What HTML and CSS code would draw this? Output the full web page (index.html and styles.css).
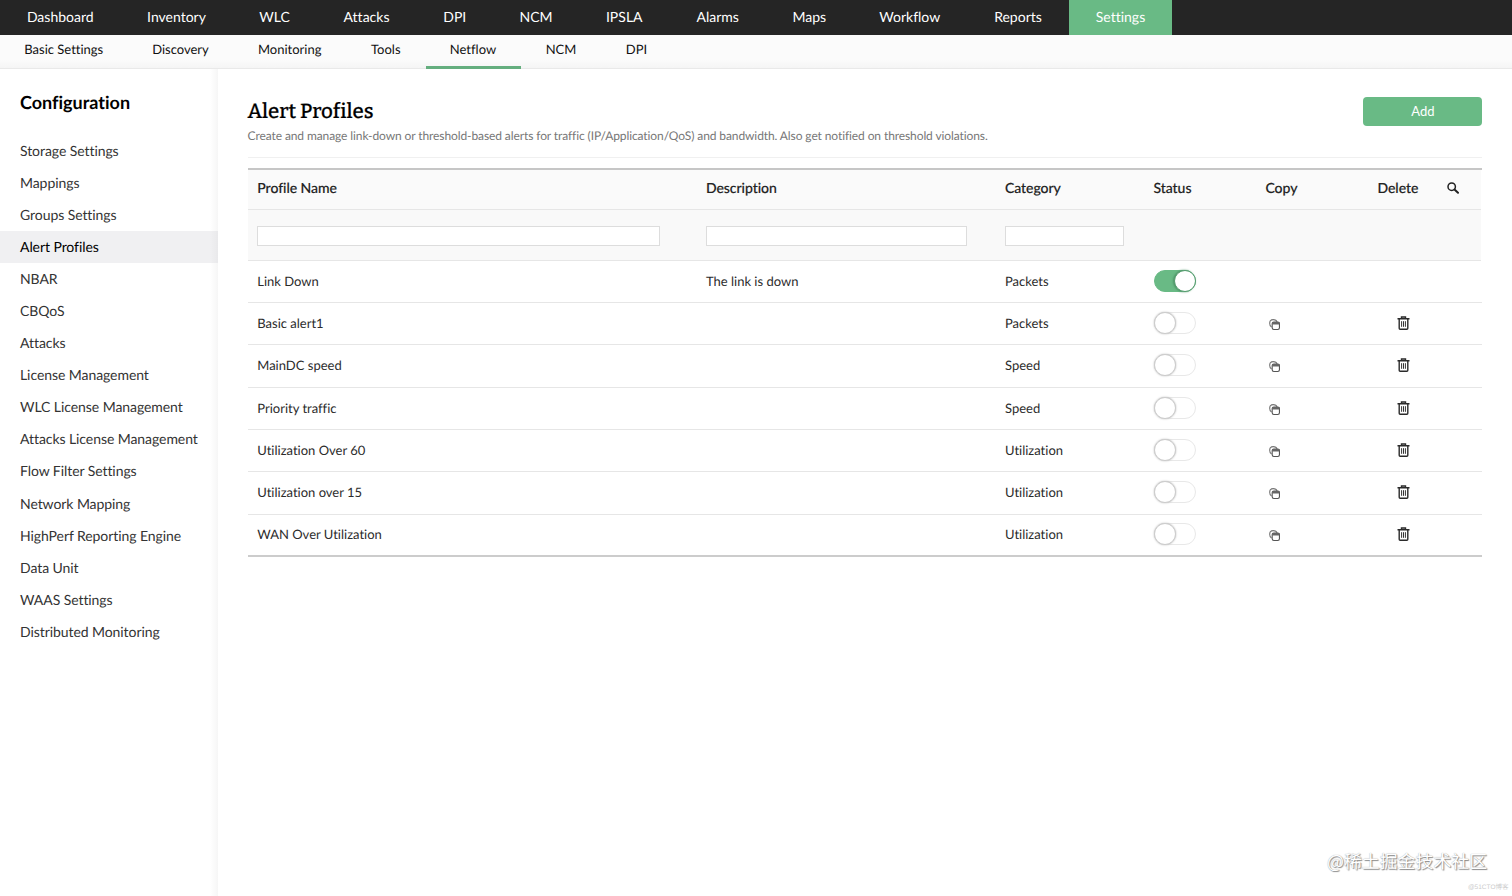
FILE: index.html
```
<!DOCTYPE html>
<html lang="en">
<head>
<meta charset="utf-8">
<title>Alert Profiles</title>
<link rel="stylesheet" href="styles.css">
</head>
<body>
<svg width="0" height="0" class="defs">
  <symbol id="copy" viewBox="0 0 10 10"><path d="M2.300 7.300C1 6.600.6 5.400.6 3.900C.6 1.700 1.700.6 3.800.6C5.700.6 6.900 1.200 7.300 2.600" fill="none" stroke="#777" stroke-width="1"/><rect x="2.900" y="2.700" width="6.600" height="6.800" rx="1.500" fill="#fff" stroke="#555" stroke-width="1"/><path d="M2.900 2.700h6.600v2.300H2.900z" fill="#666"/></symbol>
  <symbol id="trash" viewBox="0 0 12 14"><path d="M0 2.800h12M4 2.500V1h4v1.500M1.700 3v9.300q0 .9.9.9h6.800q.9 0 .9-.9V3" fill="none" stroke="#2b2b2b" stroke-width="1.400"/><path d="M4.100 5.200v5.600M6 5.200v5.600M7.900 5.200v5.600" stroke="#333" stroke-width="1"/></symbol>
</svg>
<nav class="topnav">
  <a>Dashboard</a><a>Inventory</a><a>WLC</a><a>Attacks</a><a>DPI</a><a>NCM</a><a>IPSLA</a><a>Alarms</a><a>Maps</a><a>Workflow</a><a>Reports</a><a class="active">Settings</a>
</nav>
<nav class="subnav">
  <a>Basic Settings</a><a>Discovery</a><a>Monitoring</a><a>Tools</a><a class="active">Netflow</a><a>NCM</a><a>DPI</a>
</nav>
<div class="layout">
  <aside class="sidebar">
    <h2>Configuration</h2>
    <ul>
      <li>Storage Settings</li><li>Mappings</li><li>Groups Settings</li><li class="active">Alert Profiles</li><li>NBAR</li><li>CBQoS</li><li>Attacks</li><li>License Management</li><li>WLC License Management</li><li>Attacks License Management</li><li>Flow Filter Settings</li><li>Network Mapping</li><li>HighPerf Reporting Engine</li><li>Data Unit</li><li>WAAS Settings</li><li>Distributed Monitoring</li>
    </ul>
  </aside>
  <main>
    <header class="head">
      <div><h1>Alert Profiles</h1><p>Create and manage link-down or threshold-based alerts for traffic (IP/Application/QoS) and bandwidth. Also get notified on threshold violations.</p></div>
      <button class="add">Add</button>
    </header>
    <section class="table">
      <div class="row thead"><span>Profile Name</span><span>Description</span><span>Category</span><span>Status</span><span>Copy</span><span>Delete</span><span><svg class="search" viewBox="0 0 12 12"><circle cx="4.700" cy="4.700" r="3.700" fill="none" stroke="#222" stroke-width="1.500"/><path d="M7.500 7.500l3.500 3.300" stroke="#222" stroke-width="2" stroke-linecap="round"/></svg></span></div>
      <div class="row filter"><span><input class="f1"></span><span><input class="f2"></span><span><input class="f3"></span></div>
      <div class="row"><span>Link Down</span><span>The link is down</span><span>Packets</span><span><i class="toggle on"></i></span></div>
      <div class="row"><span>Basic alert1</span><span></span><span>Packets</span><span><i class="toggle"></i></span><span><svg class="copy"><use href="#copy"/></svg></span><span><svg class="trash"><use href="#trash"/></svg></span></div>
      <div class="row"><span>MainDC speed</span><span></span><span>Speed</span><span><i class="toggle"></i></span><span><svg class="copy"><use href="#copy"/></svg></span><span><svg class="trash"><use href="#trash"/></svg></span></div>
      <div class="row"><span>Priority traffic</span><span></span><span>Speed</span><span><i class="toggle"></i></span><span><svg class="copy"><use href="#copy"/></svg></span><span><svg class="trash"><use href="#trash"/></svg></span></div>
      <div class="row"><span>Utilization Over 60</span><span></span><span>Utilization</span><span><i class="toggle"></i></span><span><svg class="copy"><use href="#copy"/></svg></span><span><svg class="trash"><use href="#trash"/></svg></span></div>
      <div class="row"><span>Utilization over 15</span><span></span><span>Utilization</span><span><i class="toggle"></i></span><span><svg class="copy"><use href="#copy"/></svg></span><span><svg class="trash"><use href="#trash"/></svg></span></div>
      <div class="row last"><span>WAN Over Utilization</span><span></span><span>Utilization</span><span><i class="toggle"></i></span><span><svg class="copy"><use href="#copy"/></svg></span><span><svg class="trash"><use href="#trash"/></svg></span></div>
    </section>
  </main>
</div>
<div class="mark">@稀土掘金技术社区</div>
<div class="mark-small">@51CTO博客</div>
</body>
</html>
```
FILE: styles.css
```
*, *::before { box-sizing: border-box; }
body { margin: 0; height: 896px; overflow: hidden; background: #fff; color: #2b2b2b; font-family: Lato, "Noto Sans CJK SC", sans-serif; font-size: 13px; display: flex; flex-direction: column; font-variant-ligatures: none; text-rendering: geometricPrecision; }
.defs { position: absolute; }
.topnav { height: 35px; flex: none; background: #252525; display: grid; grid-template-columns: 120.5px 112px 84px 100px 76.500px 86px 90.500px 96.500px 86.500px 114.500px 102px 103px; }
.topnav a { text-align: center; color: #fff; font-size: 14px; line-height: 33px; white-space: nowrap; }
.topnav .active { background: #69ba85; }
.subnav { height: 34px; flex: none; background: linear-gradient(#fbfbfb 75%, #f5f5f5); border-bottom: 1px solid #e9e9e9; display: grid; grid-template-columns: 127.500px 106px 112.500px 79.500px 95px 81px 70px; }
.subnav a { text-align: center; color: #111; font-size: 13px; line-height: 29px; height: 34px; white-space: nowrap; }
.subnav .active { border-bottom: 3px solid #64ae7e; }
.layout { display: flex; flex: 1; }
.sidebar { width: 218px; flex: none; background: linear-gradient(90deg, #fff 210px, #f6f6f6); }
.sidebar h2 { margin: 0; padding: 21px 20px 0; height: 66px; font-size: 18px; line-height: 24px; color: #000; }
.sidebar ul { list-style: none; margin: 0; padding: 0; }
.sidebar li { height: 32.060px; line-height: 32px; padding-left: 20px; font-size: 14px; letter-spacing: -.07px; white-space: nowrap; color: #333; }
.sidebar .active { background: linear-gradient(90deg, #f0f0f2 210px, #e9e9eb); color: #000; }
main { flex: 1; padding: 28px 30px 0 29.600px; }
.head { display: flex; justify-content: space-between; height: 61px; border-bottom: 1px solid #f0f0f0; width: 1234.800px; }
h1 { margin: 0; font: 500 20.500px/29px Bitter, "DejaVu Serif Condensed", "DejaVu Serif", serif; color: #000; padding-top: 1px; -webkit-text-stroke: .2px #000; }
.head p { margin: 1px 0 0; font-size: 12px; letter-spacing: -.1px; line-height: 16px; color: #777; white-space: nowrap; }
.add { width: 119px; height: 29px; border: 0; border-radius: 4px; background: #69ba85; color: #fff; font: 13px Lato, sans-serif; padding: 0 0 1px; }
.table { width: 1234.800px; margin-top: 10px; border-top: 2px solid #c6c6c6; }
.row { display: grid; grid-template-columns: 448.700px 299px 148.500px 112px 112px 70px 40px; padding-left: 9.700px; padding-bottom: 1px; height: 42.350px; border-bottom: 1px solid #e6e6e6; align-items: center; }
.row span { display: block; white-space: nowrap; }
.row svg { display: block; }
.thead { height: 40px; width: 1233px; background: #fafafa; font-size: 14px; font-weight: 500; letter-spacing: -.05px; color: #222; padding-bottom: 4px; -webkit-text-stroke: .15px #222; }
.filter { height: 50.500px; width: 1233px; background: #f9f9f9; padding: 2px 0 0 9.700px; }
.filter input { display: block; height: 20px; border: 1px solid #ddd; background: #fff; padding: 0; }
.f1 { width: 403px; }
.f2 { width: 261px; }
.f3 { width: 119px; }
.last { border-bottom: 2px solid #ccc; }
.toggle { display: block; width: 42px; height: 22px; margin-left: 1px; border-radius: 11px; border: 1px solid #e8e8e8; background: #fff; }
.toggle::before { content: ""; display: block; width: 22px; height: 22px; margin: -1px; border-radius: 50%; border: 1px solid #ccc; background: #fff; box-shadow: 0 0 2px #bbb; }
.on { background: #69ba85; border-color: #69ba85; }
.on::before { margin-left: 19px; border-color: #529b6c; box-shadow: -1px 0 2px #4e9367; }
.copy { width: 11px; height: 11px; margin: 3px 0 0 4px; }
.trash { width: 13px; height: 14px; margin-left: 20px; }
.search { width: 12px; height: 12px; }
.mark { position: absolute; left: 1327px; top: 848px; font: 17.900px/26px "Noto Sans CJK SC", sans-serif; color: #fff; text-shadow: 1px 1px 1px #888, 0 0 1px #999; white-space: nowrap; }
.mark-small { position: absolute; left: 1468px; top: 883px; font: 6.500px/10px "Liberation Sans", "Noto Sans CJK SC", sans-serif; color: #ccc; white-space: nowrap; }
```
